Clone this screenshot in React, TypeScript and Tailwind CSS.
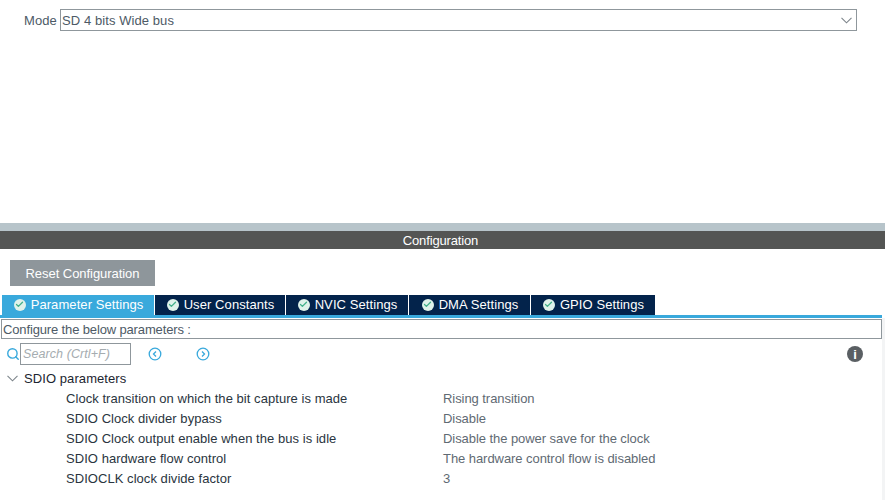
import React from 'react';
import { Search, Check } from 'lucide-react';

const tabs = [
  { label: 'Parameter Settings', width: 'w-[153px]', active: true },
  { label: 'User Constants', width: 'w-[131px]', active: false },
  { label: 'NVIC Settings', width: 'w-[123px]', active: false },
  { label: 'DMA Settings', width: 'w-[122px]', active: false },
  { label: 'GPIO Settings', width: 'w-[125px]', active: false },
];

const params = [
  ['Clock transition on which the bit capture is made', 'Rising transition'],
  ['SDIO Clock divider bypass', 'Disable'],
  ['SDIO Clock output enable when the bus is idle', 'Disable the power save for the clock'],
  ['SDIO hardware flow control', 'The hardware control flow is disabled'],
  ['SDIOCLK clock divide factor', '3'],
];

const Chevron = () => (
  <svg width="11" height="7" viewBox="0 0 11 7" fill="none" stroke="#7d858b" strokeWidth="1.1">
    <path d="M0.5 0.8 5.5 5.8 10.5 0.8" />
  </svg>
);

const NavButton = ({ dir }: { dir: 'left' | 'right' }) => (
  <svg width="14" height="14" viewBox="0 0 14 14" fill="none" stroke="#39a9dc" strokeWidth="1.3">
    <circle cx="7" cy="7" r="5.8" />
    <path d={dir === 'left' ? 'M8 4.5 5.5 7 8 9.5' : 'M6 4.5 8.5 7 6 9.5'} />
  </svg>
);

export default function App() {
  return (
    <div className="flex flex-col w-[885px] h-[500px] bg-white overflow-hidden text-[13px] leading-[15px] tracking-[0.08px] font-['Liberation_Sans',Arial,sans-serif]">
      <div className="h-[223px] flex items-start pt-[9px] pl-[24px]">
        <span className="w-[36px] h-[22px] flex items-center text-[#4d5a66]">Mode</span>
        <div className="w-[797px] h-[22px] flex items-center justify-between border border-[#8f979c] pl-[1px] pr-[4px] text-[#4d5a66]">
          <span>SD 4 bits Wide bus</span>
          <Chevron />
        </div>
      </div>

      <div className="h-[8px] bg-[#b7c4ca]" />
      <div className="h-[18px] bg-[#545554] flex items-center justify-center pr-[4px] text-white tracking-[-0.15px]">Configuration</div>

      <div className="pt-[11px] pl-[10px]">
        <button className="w-[145px] h-[26px] bg-[#8e969b] text-white tracking-[-0.05px]">Reset Configuration</button>
      </div>

      <div className="flex pt-[9px] pl-[2px] pr-[2px]">
        {tabs.map((tab) => (
          <div
            key={tab.label}
            className={`${tab.width} h-[20px] flex items-center justify-center gap-[5px] pl-[1px] pb-[1px] border-r border-white text-white ${tab.active ? 'bg-[#39a9dc]' : 'bg-[#03234b]'}`}
          >
            <span className="w-[12px] h-[12px] rounded-full bg-[#dff2ea] flex items-center justify-center">
              <Check size={9} strokeWidth={3.5} className="text-[#43b08a]" />
            </span>
            {tab.label}
          </div>
        ))}
      </div>
      <div className="h-[3px] bg-[#39a9dc] mr-[3px]" />

      <div className="flex-1 flex flex-col bg-white border-r-[3px] border-[#f3f4f5]">
        <div className="h-[20px] mt-[1px] ml-[1px] border border-[#8f979c] flex items-center pl-[1px] text-[#4d5a66] tracking-[-0.14px]">
          Configure the below parameters :
        </div>
        <div className="flex items-center h-[22px] mt-[4px] pl-[6px] pr-[19px]">
          <Search size={14} strokeWidth={2.4} className="text-[#39a9dc]" />
          <div className="w-[111px] h-[22px] border border-[#8f979c] flex items-center pl-[2px] pt-[1px] italic text-[12.5px] text-[#a5acb0]">
            Search (Crtl+F)
          </div>
          <div className="ml-[17px] flex gap-[34px]">
            <NavButton dir="left" />
            <NavButton dir="right" />
          </div>
          <div className="ml-auto w-[16px] h-[16px] rounded-full bg-[#5a5f63] flex items-center justify-center text-white font-bold text-[13px]">i</div>
        </div>
        <div className="flex items-center h-[20px] mt-[3px] pl-[7px] text-[#1c2530]">
          <span className="mr-[6px] flex">
            <Chevron />
          </span>
          SDIO parameters
        </div>
        {params.map(([name, value]) => (
          <div key={name} className="flex items-center h-[20px] pl-[66px]">
            <span className="w-[377px] text-[#2a3540] tracking-[0.05px]">{name}</span>
            <span className="text-[#5f6a73] tracking-[-0.06px]">{value}</span>
          </div>
        ))}
      </div>
    </div>
  );
}
